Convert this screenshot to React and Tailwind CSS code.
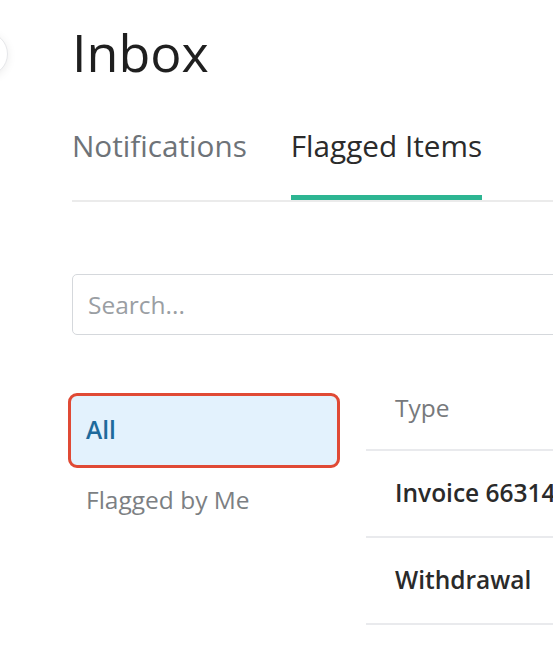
import React, { useState } from 'react';

const rows = [
  { type: 'Invoice 66314' },
  { type: 'Withdrawal' },
];

const App = () => {
  const [tab, setTab] = useState('flagged');
  const [filter, setFilter] = useState('all');

  return (
    <div className="relative w-[553px] h-[651px] overflow-hidden bg-white" style={{ fontFamily: '"Open Sans", sans-serif' }}>
      {/* collapsed sidebar toggle */}
      <div className="absolute left-[-36px] top-[32px] w-[44px] h-[44px] rounded-full bg-white border border-[#e6e7ea] shadow-[0_2px_10px_rgba(0,0,0,0.08)]" />

      <div className="pl-[72px] pt-[26px] w-[1000px]">
        <h1 className="text-[52px] leading-[52px] text-[#1f1f1f] font-normal">Inbox</h1>

        {/* Tabs */}
        <div className="mt-[53px] flex gap-[44px] border-b-2 border-[#ebebeb]">
          <button
            onClick={() => setTab('notifications')}
            className={`pb-[34px] text-[29.7px] leading-[30px] border-b-[5px] ${
              tab === 'notifications' ? 'border-[#2db592] text-[#2b2b2b]' : 'border-transparent text-[#6e7378]'
            }`}
          >
            Notifications
          </button>
          <button
            onClick={() => setTab('flagged')}
            className={`pb-[34px] text-[29.7px] leading-[30px] border-b-[5px] ${
              tab === 'flagged' ? 'border-[#2db592] text-[#2b2b2b]' : 'border-transparent text-[#6e7378]'
            }`}
          >
            Flagged Items
          </button>
        </div>

        {/* Search */}
        <input
          type="text"
          placeholder="Search..."
          className="mt-[72px] w-[800px] h-[61px] px-[15px] rounded-[5px] border border-[#d5d8dc] text-[24.5px] text-[#2b2b2b] placeholder:text-[#9a9ea3] outline-none"
        />

        <div className="flex mt-[28px]">
          {/* Filters */}
          <div className="w-[272px] ml-[-4px] mt-[30px] flex flex-col">
            <button
              onClick={() => setFilter('all')}
              className={`h-[75px] px-[15px] text-left text-[24.5px] rounded-[9px] border-[3px] ${
                filter === 'all' ? 'bg-[#e3f2fd] border-[#e04a35] text-[#1e6a9b] font-semibold' : 'border-transparent text-[#7c7f83]'
              }`}
            >
              All
            </button>
            <button
              onClick={() => setFilter('me')}
              className={`h-[65px] px-[15px] text-left text-[24.5px] rounded-[9px] border-[3px] ${
                filter === 'me' ? 'bg-[#e3f2fd] border-[#e04a35] text-[#1e6a9b] font-semibold' : 'border-transparent text-[#7c7f83]'
              }`}
            >
              Flagged by Me
            </button>
          </div>

          {/* Table */}
          <div className="ml-[26px] mt-[1px] w-[600px]">
            <div className="h-[87px] flex items-center pt-[4px] pl-[29px] border-b-2 border-[#e9eaed] text-[24.5px] text-[#77797c]">
              Type
            </div>
            {rows.map((row) => (
              <div key={row.type} className="h-[87px] flex items-center pl-[29px] border-b-2 border-[#e9eaed] text-[24.5px] text-[#2a2a2a] font-semibold whitespace-nowrap">
                {row.type}
              </div>
            ))}
          </div>
        </div>
      </div>
    </div>
  );
};

export default App;
